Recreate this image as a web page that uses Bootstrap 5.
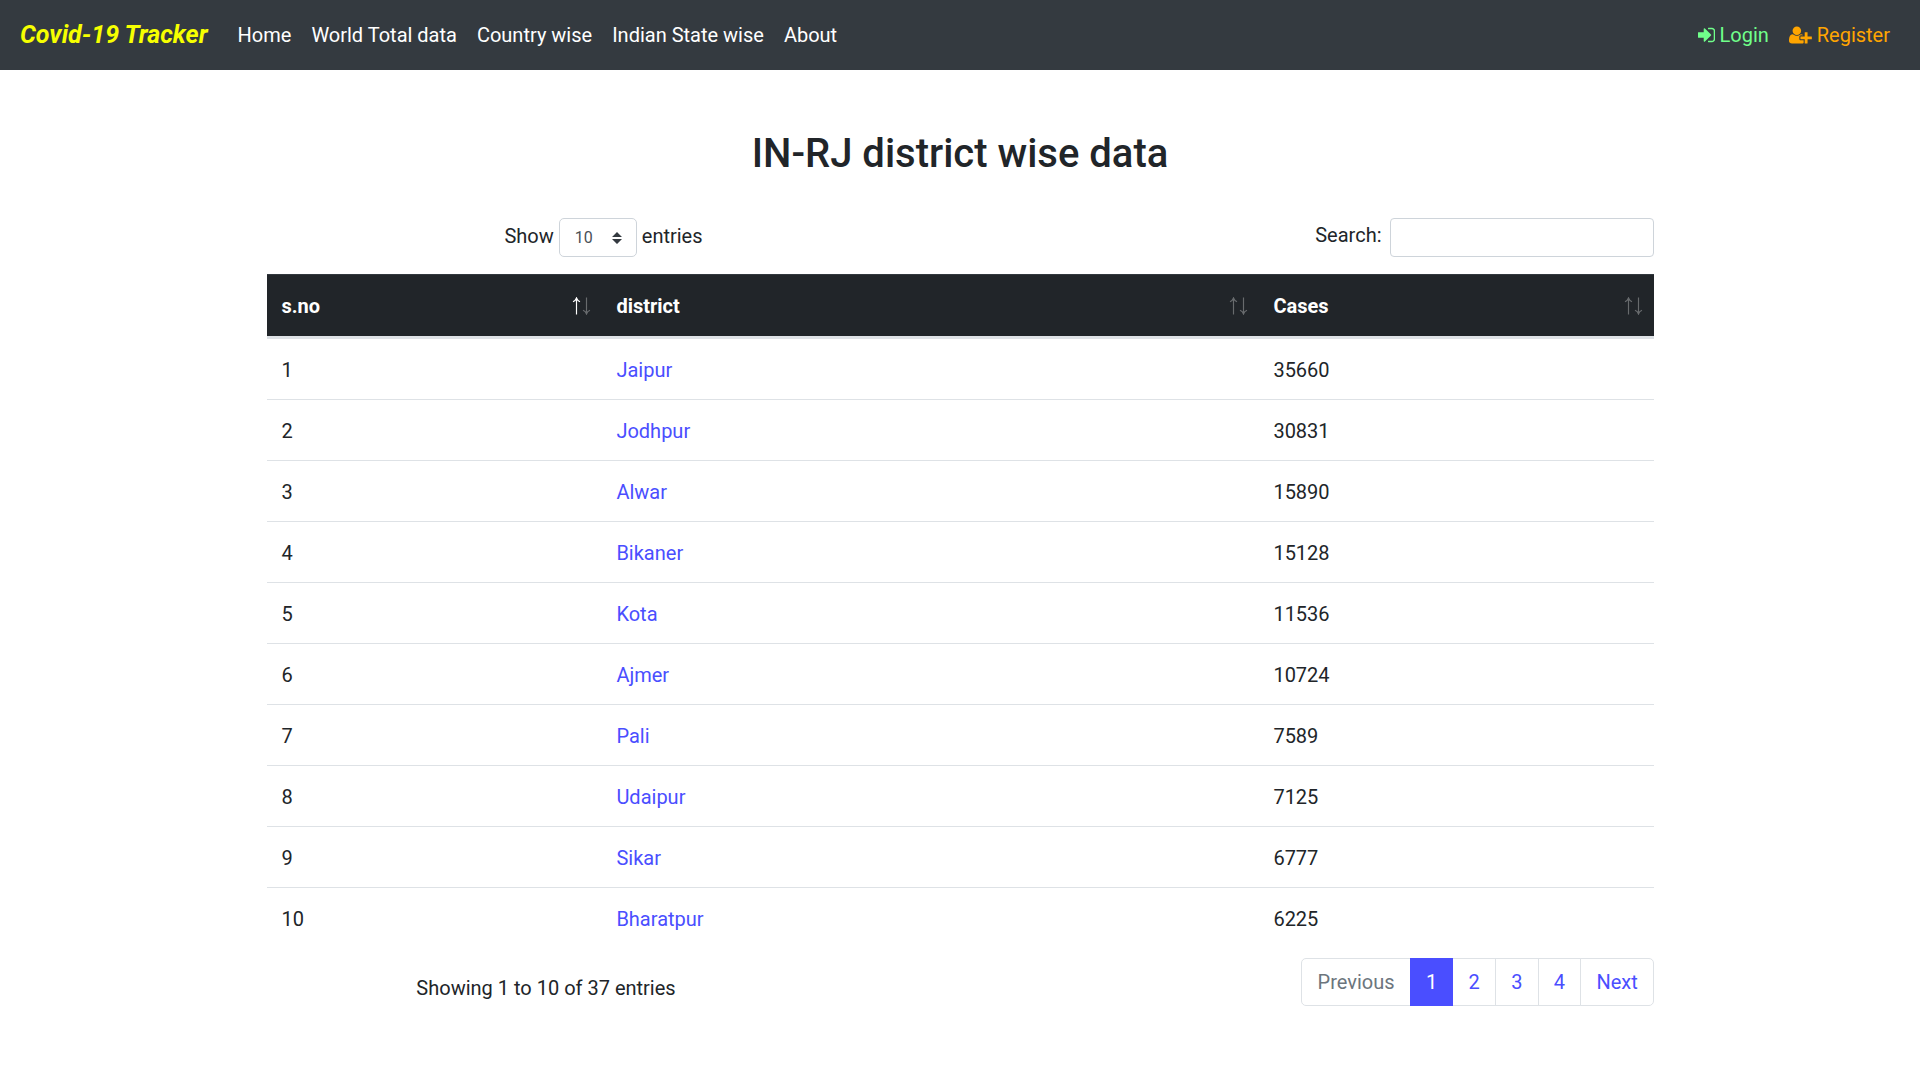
<!DOCTYPE html>
<html lang="en">
<head>
<meta charset="utf-8">
<meta name="viewport" content="width=device-width, initial-scale=1">
<title>Covid-19 Tracker</title>
<link href="https://cdn.jsdelivr.net/npm/bootstrap@5.3.0/dist/css/bootstrap.min.css" rel="stylesheet">
<style>
  html { font-size: 20px; }
  body { font-family: Roboto, "Liberation Sans", sans-serif; color: #212529; overflow: hidden; }
  a { color: #4a4eff; text-decoration: none; }
  .topbar { background: #343a40; height: 70px; padding: 10px 20px; }
  .topbar .navbar-brand { color: #f6ff00; font-weight: 700; font-style: italic; font-size: 1.25rem; margin-right: 1rem; }
  .topbar .nav-link { color: #fff; padding: .5rem; }
  .topbar .nav-login { color: #70ff8a; }
  .topbar .nav-register { color: orange; }
  .fa-glyph { height: 1em; fill: currentColor; vertical-align: -.143em; }
  .page-wrap { width: 1387px; margin: 0 0 0 267px; }
  .page-title { font-size: 2rem; font-weight: 500; line-height: 1.2; margin: 60px 1px 40px 0; }
  .length-col { width: 673px; }
  .length-col > span { padding-bottom: 3px; }
  .search-col > label { padding-bottom: 5px; }
  .length-select { width: 78px; height: 39px; border: 1px solid #ced4da; border-radius: 5px; font-size: 16px; color: #495057; padding: 0 14px 0 15px; margin: 0 5px; }
  .search-box { width: 264px; height: 39px; border: 1px solid #ced4da; border-radius: 4px; margin-left: 8.5px; padding: 0 10px; }
  .data-table { table-layout: fixed; margin: 17px 0 0; --bs-table-color: #212529; border-collapse: separate; border-spacing: 0; }
  .data-table th { height: 62px; padding: 0 14.4px; vertical-align: middle; background: #212529; color: #fff; border-top: 1px solid #32383e; border-bottom: 0; position: relative; }
  .data-table td { height: 61px; padding: 2px 14.4px 0; vertical-align: middle; border-top: 1px solid #dee2e6; border-bottom: 0; }
  .data-table tbody tr:first-child td { height: 63px; border-top-width: 3px; }
  .sorter { position: absolute; right: 10px; top: 22px; width: 20px; height: 18px; fill: none; stroke: #fff; stroke-width: 1.15; }
  .sorter path { opacity: .32; }
  .sorter path.on { opacity: 1; }
  .info-col { width: 558px; padding-top: 15px; }
  .pager .page-link { height: 48px; line-height: 25px; padding: 10.5px 15.2px; color: #4a4eff; border-color: #dee2e6; font-size: 20px; }
  .pager .disabled .page-link { color: #6c757d; background: #fff; }
  .pager .active .page-link { color: #fff; background: #4a4eff; border-color: #4a4eff; }
  .pager .page-item:first-child .page-link { border-radius: 5px 0 0 5px; }
  .pager .page-item:last-child .page-link { border-radius: 0 5px 5px 0; }
</style>
<script src="https://cdn.jsdelivr.net/npm/bootstrap@5.3.0/dist/js/bootstrap.bundle.min.js"></script>
</head>
<body>
<nav class="topbar d-flex align-items-center">
  <a class="navbar-brand" href="#">Covid-19 Tracker</a>
  <ul class="nav me-auto">
    <li class="nav-item"><a class="nav-link" href="#">Home</a></li>
    <li class="nav-item"><a class="nav-link" href="#">World Total data</a></li>
    <li class="nav-item"><a class="nav-link" href="#">Country wise</a></li>
    <li class="nav-item"><a class="nav-link" href="#">Indian State wise</a></li>
    <li class="nav-item"><a class="nav-link" href="#">About</a></li>
  </ul>
  <ul class="nav">
    <li class="nav-item"><a class="nav-link nav-login" href="#"><svg class="fa-glyph" viewBox="0 0 1536 1792"><path d="M1184 896q0 26-19 45l-544 544q-19 19-45 19t-45-19-19-45v-288h-448q-26 0-45-19t-19-45v-384q0-26 19-45t45-19h448v-288q0-26 19-45t45-19 45 19l544 544q19 19 19 45zm352-352v704q0 119-84.5 203.5t-203.5 84.5h-320q-13 0-22.5-9.5t-9.5-22.5q0-4-1-20t-.5-26.5 3-23.5 10-19.5 20.5-6.5h320q66 0 113-47t47-113v-704q0-66-47-113t-113-47h-312l-11.5-1-11.5-3-8-5.5-7-9-2-13.5q0-4-1-20t-.5-26.5 3-23.5 10-19.5 20.5-6.5h320q119 0 203.5 84.5t84.5 203.5z"/></svg> Login</a></li>
    <li class="nav-item"><a class="nav-link nav-register" href="#"><svg class="fa-glyph" viewBox="0 0 2048 1792"><path d="M704 896q-159 0-271.5-112.5t-112.5-271.5 112.5-271.5 271.5-112.5 271.5 112.5 112.5 271.5-112.5 271.5-271.5 112.5zm960 128h352q13 0 22.5 9.5t9.5 22.5v192q0 13-9.5 22.5t-22.5 9.5h-352v352q0 13-9.5 22.5t-22.5 9.5h-192q-13 0-22.5-9.5t-9.5-22.5v-352h-352q-13 0-22.5-9.5t-9.5-22.5v-192q0-13 9.5-22.5t22.5-9.5h352v-352q0-13 9.5-22.5t22.5-9.5h192q13 0 22.5 9.5t9.5 22.5v352zm-736 224q0 52 38 90t90 38h256v238q-68 50-171 50h-874q-121 0-194-69t-73-190q0-53 3.5-103.5t14-109 26.5-108.5 43-97.5 62-81 85.5-53.5 111.5-20q19 0 39 17 79 61 154.5 91.5t164.5 30.5 164.5-30.5 154.5-91.5q20-17 39-17 132 0 217 96h-223q-52 0-90 38t-38 90v192z"/></svg> Register</a></li>
  </ul>
</nav>
<main class="page-wrap">
  <h2 class="page-title text-center">IN-RJ district wise data</h2>
  <div class="d-flex justify-content-between">
    <div class="length-col d-flex justify-content-center align-items-center">
      <span>Show</span>
      <div class="length-select d-flex align-items-center justify-content-between"><span>10</span>
        <svg width="10" height="12" viewBox="0 0 10 12"><path fill="#343a40" d="M5 0l5 5H0zM0 7h10l-5 5z"/></svg></div>
      <span>entries</span>
    </div>
    <div class="search-col d-flex justify-content-end align-items-center">
      <label for="q">Search:</label><input id="q" class="search-box" type="search">
    </div>
  </div>
  <table class="table data-table">
    <colgroup><col style="width:335px"><col style="width:657px"><col></colgroup>
    <thead><tr>
      <th>s.no<svg class="sorter" viewBox="0 0 20 18"><path class="on" d="M4.5 17.5V1M1 4.7Q3.6 3.6 4.5 1Q5.4 3.6 8 4.7"/><path d="M14.5 .5V17M11 13.3Q13.6 14.4 14.5 17Q15.4 14.4 18 13.3"/></svg></th>
      <th>district<svg class="sorter" viewBox="0 0 20 18"><path d="M4.5 17.5V1M1 4.7Q3.6 3.6 4.5 1Q5.4 3.6 8 4.7"/><path d="M14.5 .5V17M11 13.3Q13.6 14.4 14.5 17Q15.4 14.4 18 13.3"/></svg></th>
      <th>Cases<svg class="sorter" viewBox="0 0 20 18"><path d="M4.5 17.5V1M1 4.7Q3.6 3.6 4.5 1Q5.4 3.6 8 4.7"/><path d="M14.5 .5V17M11 13.3Q13.6 14.4 14.5 17Q15.4 14.4 18 13.3"/></svg></th>
    </tr></thead>
    <tbody>
      <tr><td>1</td><td><a href="#">Jaipur</a></td><td>35660</td></tr>
      <tr><td>2</td><td><a href="#">Jodhpur</a></td><td>30831</td></tr>
      <tr><td>3</td><td><a href="#">Alwar</a></td><td>15890</td></tr>
      <tr><td>4</td><td><a href="#">Bikaner</a></td><td>15128</td></tr>
      <tr><td>5</td><td><a href="#">Kota</a></td><td>11536</td></tr>
      <tr><td>6</td><td><a href="#">Ajmer</a></td><td>10724</td></tr>
      <tr><td>7</td><td><a href="#">Pali</a></td><td>7589</td></tr>
      <tr><td>8</td><td><a href="#">Udaipur</a></td><td>7125</td></tr>
      <tr><td>9</td><td><a href="#">Sikar</a></td><td>6777</td></tr>
      <tr><td>10</td><td><a href="#">Bharatpur</a></td><td>6225</td></tr>
    </tbody>
  </table>
  <div class="d-flex justify-content-between mt-2">
    <div class="info-col text-center">Showing 1 to 10 of 37 entries</div>
    <ul class="pagination pager mb-0">
      <li class="page-item disabled"><a class="page-link" href="#">Previous</a></li>
      <li class="page-item active"><a class="page-link" href="#">1</a></li>
      <li class="page-item"><a class="page-link" href="#">2</a></li>
      <li class="page-item"><a class="page-link" href="#">3</a></li>
      <li class="page-item"><a class="page-link" href="#">4</a></li>
      <li class="page-item"><a class="page-link" href="#">Next</a></li>
    </ul>
  </div>
</main>
</body>
</html>
